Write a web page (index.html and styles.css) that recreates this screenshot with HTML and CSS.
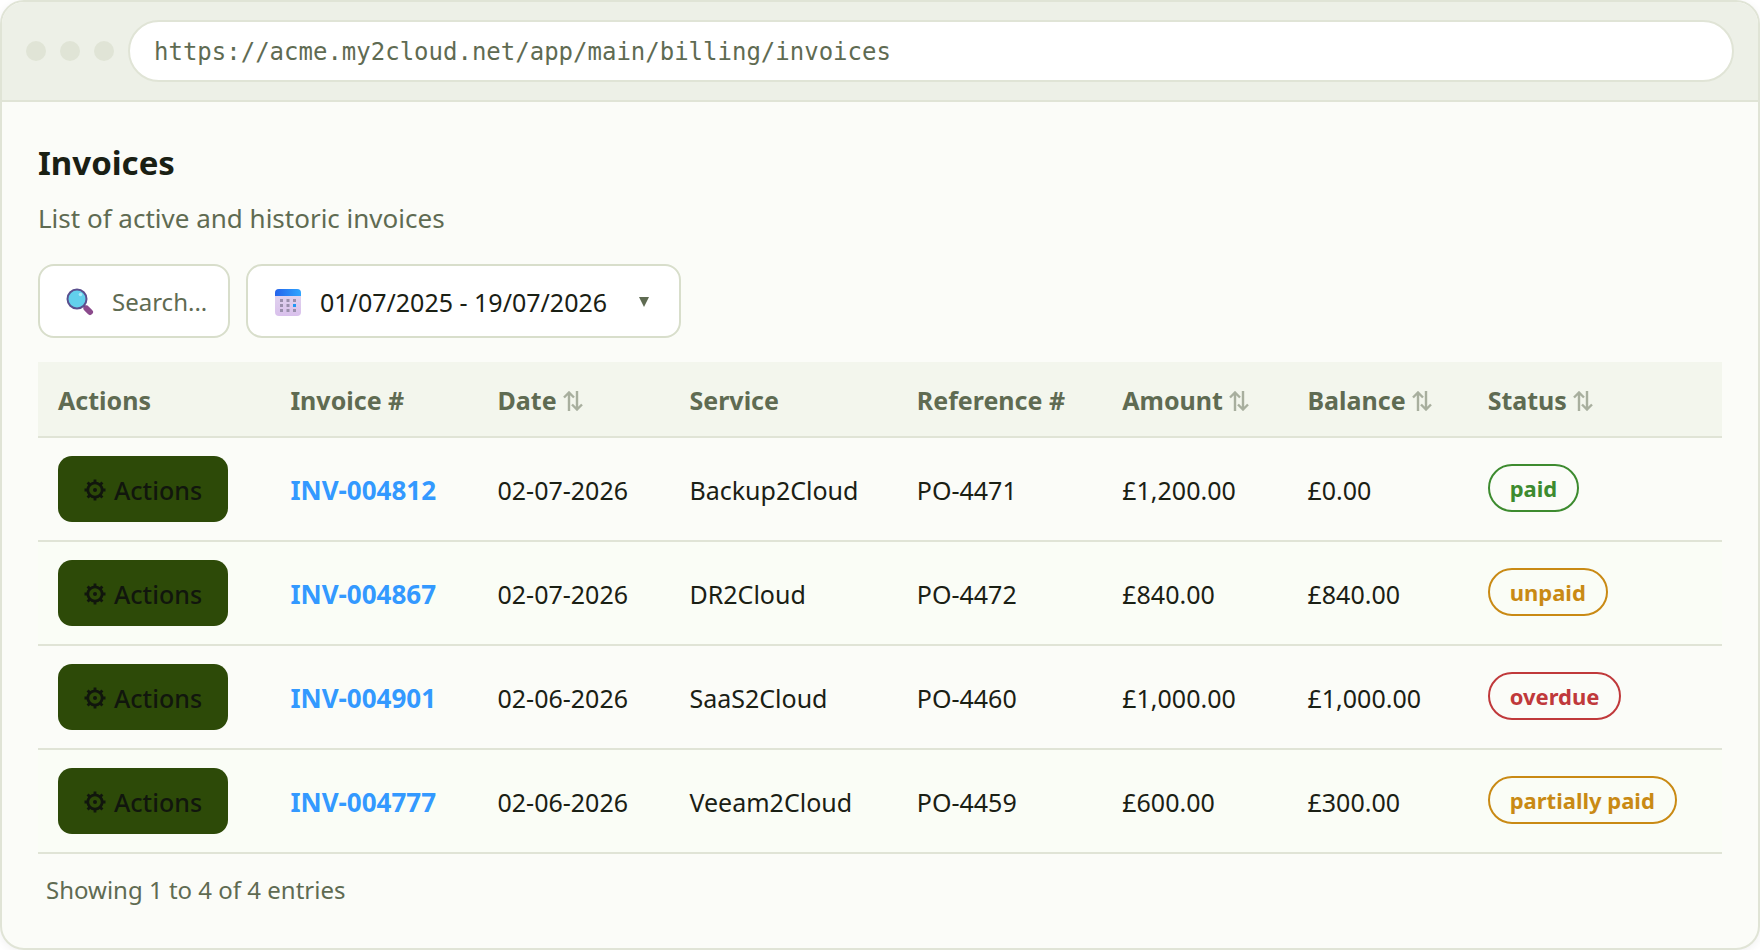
FILE: index.html
```html
<!DOCTYPE html>
<html lang="en">
<head>
  <meta charset="UTF-8" />
  <meta name="viewport" content="width=device-width, initial-scale=1.0"/>
  <title>Invoices</title>
  <link rel="stylesheet" href="styles.css">
</head>
<body>

  <!-- shared icons -->
  <svg class="sprite" aria-hidden="true">
    <symbol id="sort" viewBox="0 0 20 20">
      <path d="M6 20V1.500M1 6.500l5-5 5 5M14 0v18.500M9 13.500l5 5 5-5" fill="none" stroke="currentColor" stroke-width="2.400"/>
    </symbol>
    <symbol id="gear" viewBox="0 0 22 22">
      <circle cx="11" cy="11" r="7.200" fill="none" stroke="currentColor" stroke-width="2.800"/>
      <circle cx="11" cy="11" r="2" fill="currentColor"/>
      <path d="M11 .5v3M11 18.500v3M.5 11h3M18.500 11h3M3.600 3.600l2 2M16.400 16.400l2 2M3.600 18.400l2-2M16.400 5.600l2-2" stroke="currentColor" stroke-width="2.800"/>
    </symbol>
  </svg>

  <div class="window">
    <div class="toolbar">
      <span class="dot"></span>
      <span class="dot"></span>
      <span class="dot"></span>
      <input class="url" type="text" value="https://acme.my2cloud.net/app/main/billing/invoices" aria-label="Address" readonly>
    </div>

    <main class="content">
      <h1>Invoices</h1>
      <p class="subtitle">List of active and historic invoices</p>

      <div class="filters">
        <label class="filter search">
          <svg class="emoji" viewBox="0 0 28 28" aria-hidden="true">
            <path d="M18 18l2.500 2.500" stroke="#5b4a8a" stroke-width="3"/>
            <path d="M20.500 20.500l3.500 3.500" stroke="#8b4a8c" stroke-width="6" stroke-linecap="round"/>
            <circle cx="11" cy="11" r="9.500" fill="#62d0ec" stroke="#5a4f8e" stroke-width="2"/>
            <circle cx="14.500" cy="6.500" r="1.800" fill="#a9e8f8"/>
          </svg>
          <input type="text" placeholder="Search..." aria-label="Search">
        </label>
        <button class="filter date-range" type="button">
          <svg class="emoji" viewBox="0 0 28 28" aria-hidden="true">
            <defs>
              <linearGradient id="cal-top"><stop offset="0" stop-color="#2563eb"/><stop offset="1" stop-color="#2ea6ff"/></linearGradient>
              <linearGradient id="cal-body" x2="0" y2="1"><stop offset="0" stop-color="#e2d8ee"/><stop offset="1" stop-color="#d9c0ec"/></linearGradient>
            </defs>
            <rect x="1" y="1" width="26" height="27" rx="4" fill="url(#cal-body)"/>
            <path d="M1 8V5a4 4 0 0 1 4-4h18a4 4 0 0 1 4 4v3z" fill="url(#cal-top)"/>
            <path d="M6 11h3v3H6zM12.500 11h3v3h-3zM19 11h3v3h-3zM6 16h3v3H6zM12.500 16h3v3h-3zM6 21h3v3H6zM12.500 21h3v3h-3zM19 21h3v3h-3z" fill="#9a8fac"/>
            <path d="M19 16h3v3h-3z" fill="#2196f3"/>
          </svg>
          <span>01/07/2025 - 19/07/2026</span>
          <svg class="caret" viewBox="0 0 10 10" aria-hidden="true"><path d="M0 0h10L5 10z" fill="currentColor"/></svg>
        </button>
      </div>

      <table>
        <thead>
          <tr>
            <th class="col-actions">Actions</th>
            <th class="col-invoice">Invoice #</th>
            <th class="col-date">Date <svg class="sort"><use href="#sort"/></svg></th>
            <th class="col-service">Service</th>
            <th class="col-reference">Reference #</th>
            <th class="col-amount">Amount <svg class="sort"><use href="#sort"/></svg></th>
            <th class="col-balance">Balance <svg class="sort"><use href="#sort"/></svg></th>
            <th class="col-status">Status <svg class="sort"><use href="#sort"/></svg></th>
          </tr>
        </thead>
        <tbody>
          <tr>
            <td><button class="actions-btn" type="button"><svg class="gear"><use href="#gear"/></svg>Actions</button></td>
            <td><a href="#">INV-004812</a></td>
            <td>02-07-2026</td>
            <td>Backup2Cloud</td>
            <td>PO-4471</td>
            <td>£1,200.00</td>
            <td>£0.00</td>
            <td><span class="badge paid">paid</span></td>
          </tr>
          <tr>
            <td><button class="actions-btn" type="button"><svg class="gear"><use href="#gear"/></svg>Actions</button></td>
            <td><a href="#">INV-004867</a></td>
            <td>02-07-2026</td>
            <td>DR2Cloud</td>
            <td>PO-4472</td>
            <td>£840.00</td>
            <td>£840.00</td>
            <td><span class="badge unpaid">unpaid</span></td>
          </tr>
          <tr>
            <td><button class="actions-btn" type="button"><svg class="gear"><use href="#gear"/></svg>Actions</button></td>
            <td><a href="#">INV-004901</a></td>
            <td>02-06-2026</td>
            <td>SaaS2Cloud</td>
            <td>PO-4460</td>
            <td>£1,000.00</td>
            <td>£1,000.00</td>
            <td><span class="badge overdue">overdue</span></td>
          </tr>
          <tr>
            <td><button class="actions-btn" type="button"><svg class="gear"><use href="#gear"/></svg>Actions</button></td>
            <td><a href="#">INV-004777</a></td>
            <td>02-06-2026</td>
            <td>Veeam2Cloud</td>
            <td>PO-4459</td>
            <td>£600.00</td>
            <td>£300.00</td>
            <td><span class="badge unpaid">partially paid</span></td>
          </tr>
        </tbody>
      </table>

      <p class="entries">Showing 1 to 4 of 4 entries</p>
    </main>
  </div>

</body>
</html>
```
FILE: styles.css
```css
* {
  box-sizing: border-box;
}
body {
  margin: 0;
  background-color: #fff;
  color: #1a2014;
  font-family: "Segoe UI", "Noto Sans", sans-serif;
  font-size: 24px;
  line-height: 32px;
}
input, button {
  font: inherit;
  color: inherit;
}
.sprite {
  display: none;
}
.window {
  border: 2px solid #e0e4d6;
  border-radius: 24px;
  background-color: #fbfcf8;
  box-shadow: 0 2px 8px rgba(0,0,0,0.06);
  overflow: hidden;
}
.toolbar {
  display: flex;
  align-items: center;
  gap: 14px;
  padding: 18px 24px;
  background-color: #edf0e7;
  border-bottom: 2px solid #e0e4d6;
}
.dot {
  width: 20px;
  height: 20px;
  border-radius: 50%;
  background-color: #e0e4d6;
}
.url {
  flex: 1;
  min-width: 0;
  height: 62px;
  padding: 2px 24px 0;
  border: 2px solid #e0e4d6;
  border-radius: 31px;
  background-color: #fff;
  color: #5f6b52;
  font-family: Consolas, "DejaVu Sans Mono", monospace;
}
.content {
  padding: 36px;
}
h1 {
  margin: 0 0 12px;
  font-size: 33px;
  line-height: 50px;
}
.subtitle {
  margin: 0 0 28px;
  color: #5f6b52;
  font-size: 26px;
  line-height: 36px;
}
.filters {
  display: flex;
  gap: 16px;
  margin-bottom: 24px;
}
.filter {
  display: flex;
  align-items: center;
  gap: 18px;
  height: 74px;
  padding: 2px 26px 0;
  border: 2px solid #d8decb;
  border-radius: 16px;
  background-color: #fff;
}
.search {
  width: 192px;
  padding-right: 16px;
}
.search input {
  width: 100%;
  min-width: 0;
  padding: 0;
  border: none;
  outline: none;
  background: transparent;
}
.search input::placeholder {
  color: #5f6b52;
  opacity: 1;
}
.date-range {
  font-size: 25px;
  cursor: pointer;
}
.emoji {
  flex: none;
  width: 28px;
  height: 28px;
}
.caret {
  width: 10px;
  height: 10px;
  margin: 0 4px 0 14px;
  color: #5f6b52;
}
table {
  width: 100%;
  table-layout: fixed;
  border-collapse: separate;
  border-spacing: 0;
  font-size: 25px;
}
th, td {
  padding: 2px 0 0 20px;
  border-bottom: 2px solid #e0e4d6;
  text-align: left;
  white-space: nowrap;
}
th {
  height: 76px;
  background-color: #f3f6ed;
  color: #5f6b52;
}
td {
  height: 104px;
}
td:first-child {
  padding-top: 0;
}
td:last-child {
  padding-top: 0;
  padding-bottom: 2px;
}
tbody tr:nth-child(even) {
  background-color: #fafdf6;
}
.col-actions { width: 13.8%; }
.col-invoice { width: 12.3%; }
.col-date { width: 11.4%; }
.col-service { width: 13.5%; }
.col-reference { width: 12.2%; }
.col-amount { width: 11%; }
.col-balance { width: 10.7%; }
.col-status { width: 15.1%; }
.sort {
  width: 20px;
  height: 20px;
  vertical-align: -1px;
  opacity: 0.5;
}
td a {
  color: #3399ff;
  font-size: 26px;
  font-weight: bold;
  text-decoration: none;
}
.actions-btn {
  display: flex;
  align-items: center;
  justify-content: center;
  gap: 8px;
  width: 170px;
  height: 66px;
  padding: 2px 0 0;
  border: none;
  border-radius: 14px;
  background-color: #2d4a08;
  color: #11160d;
  font-weight: 500;
  cursor: pointer;
}
.gear {
  width: 22px;
  height: 22px;
}
.badge {
  display: inline-block;
  padding: 6px 20px;
  border: 2px solid;
  border-radius: 24px;
  font-size: 22px;
  font-weight: bold;
  vertical-align: middle;
}
.paid {
  color: #3d8b2f;
}
.unpaid {
  color: #c98a14;
}
.overdue {
  color: #c0393b;
}
.entries {
  margin: 20px 8px 6px;
  color: #5f6b52;
}
```
